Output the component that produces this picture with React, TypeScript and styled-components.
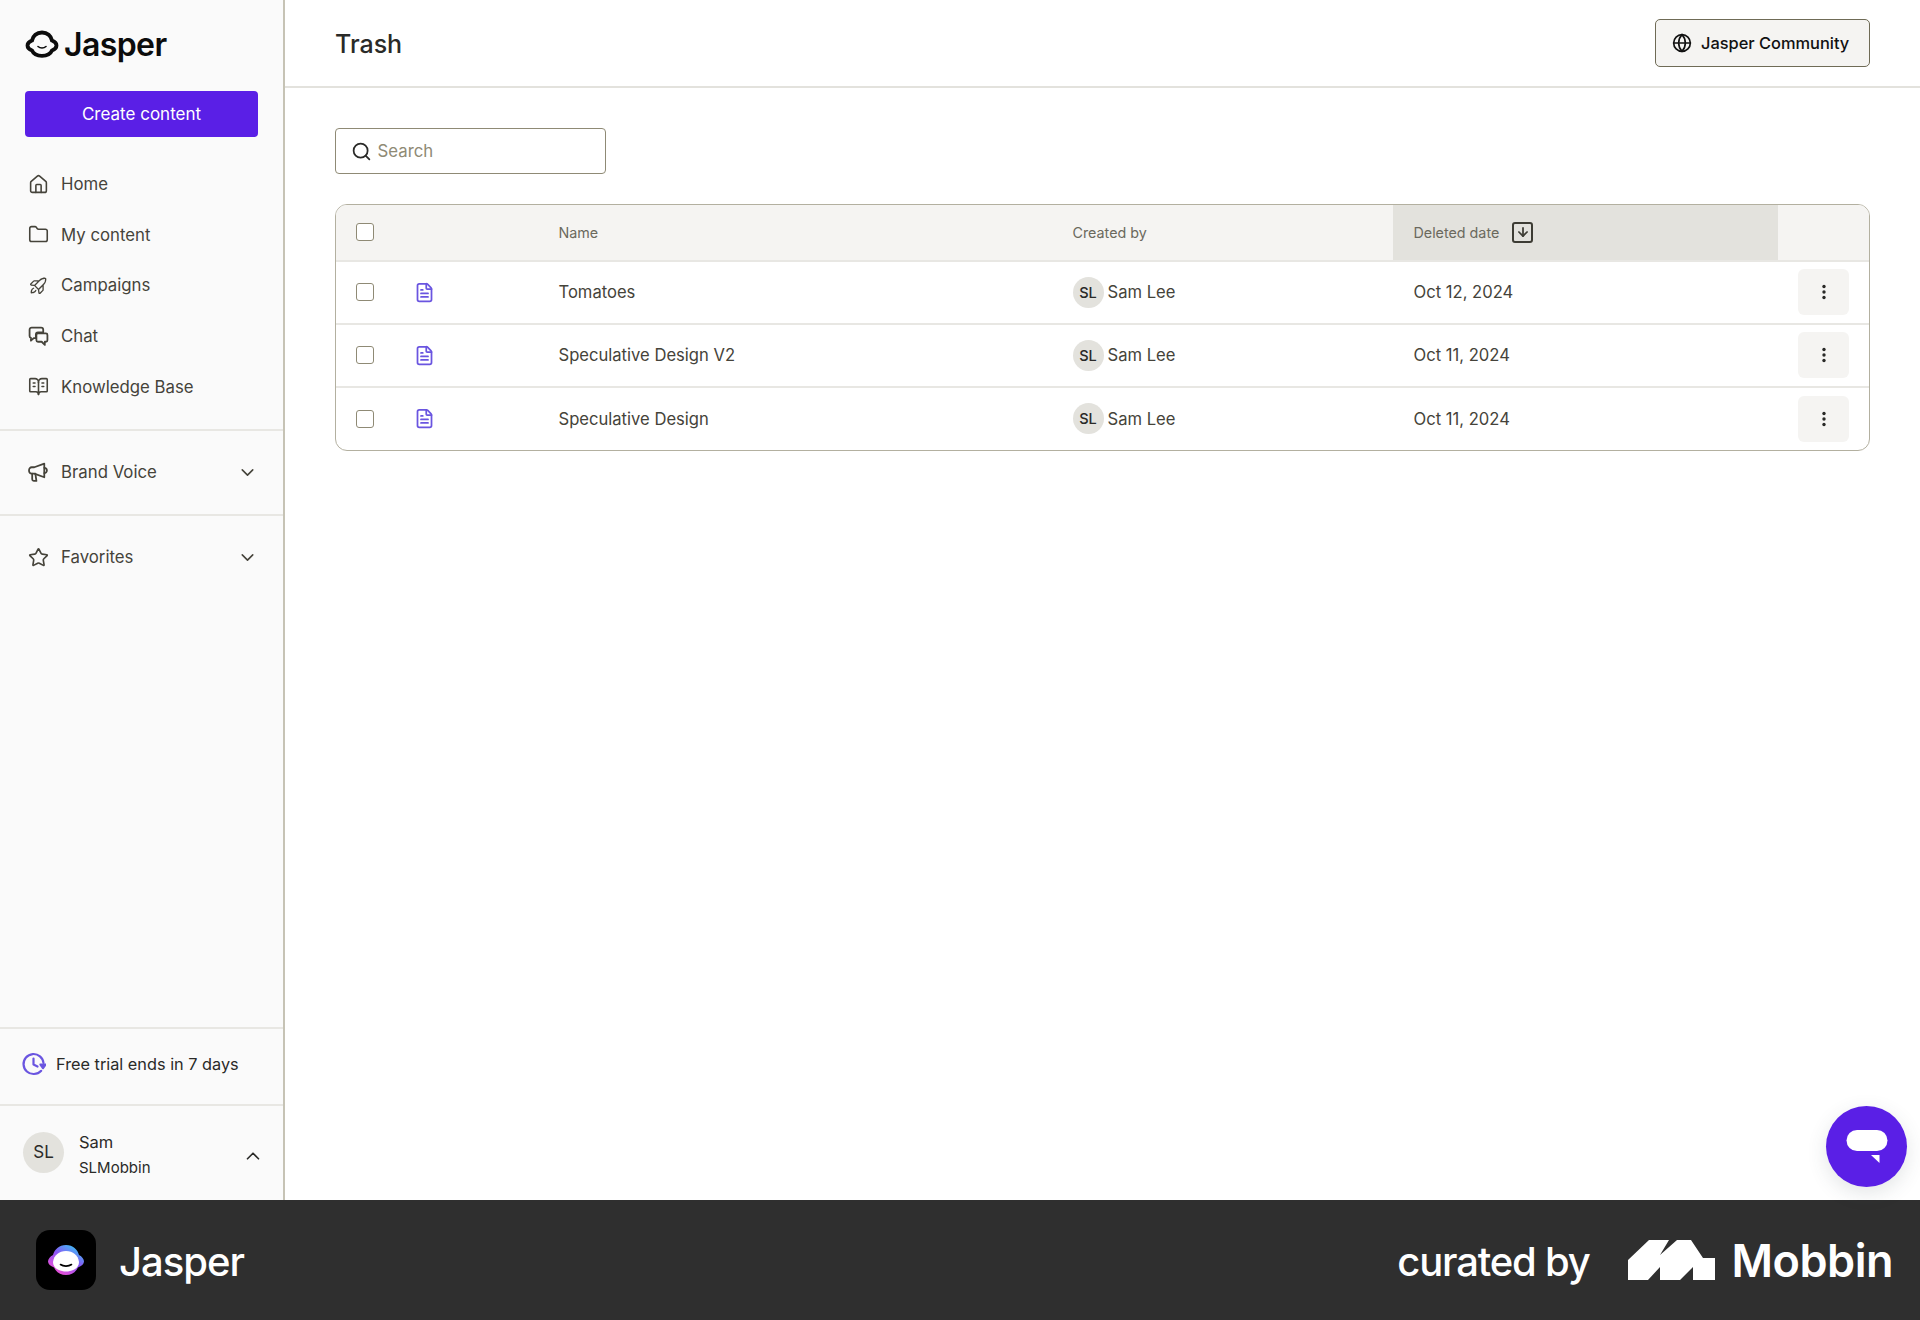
import styled, { createGlobalStyle } from "styled-components";
import {
	House,
	Folder,
	BookOpenText,
	Star,
	ChevronDown,
	ChevronUp,
	FileText,
	Search,
	Globe,
	ArrowDown,
} from "lucide-react";
import { PiRocketLaunch } from "react-icons/pi";

const GlobalStyle = createGlobalStyle`
	html, body {
		margin: 0;
		padding: 0;
		background: #ffffff;
		font-family: Inter, "Liberation Sans", sans-serif;
	}
	* {
		box-sizing: border-box;
	}
`;

const Page = styled.div`
	display: flex;
	flex-direction: column;
	width: 1920px;
	height: 1320px;
	overflow: hidden;
`;

const Body = styled.div`
	position: relative;
	display: flex;
	height: 1200px;
`;

const Sidebar = styled.aside`
	display: flex;
	flex-direction: column;
	flex: 0 0 285px;
	background: #fafafa;
	border-right: 2px solid #c6c3b5;
`;

const SideTop = styled.div`
	padding: 0 25px 17px;
	border-bottom: 2px solid #e8e7e3;
`;

const LogoRow = styled.div`
	display: flex;
	align-items: center;
	gap: 5px;
	height: 91px;
	padding-bottom: 3px;
	color: #0c0c0c;
`;

const LogoText = styled.span`
	font-size: 32px;
	font-weight: 600;
	letter-spacing: -0.6px;
`;

const CreateButton = styled.button`
	display: block;
	width: 233px;
	height: 46px;
	border: none;
	border-radius: 4px;
	background: #5a1fe6;
	color: #ffffff;
	font-family: inherit;
	font-size: 17px;
	font-weight: 400;
`;

const Nav = styled.nav`
	display: flex;
	flex-direction: column;
	margin-top: 22px;
`;

const NavItem = styled.a`
	display: flex;
	align-items: center;
	gap: 12px;
	height: 50.6px;
	padding-left: 3px;
	color: #45433a;
	font-size: 16.8px;
	font-weight: 400;
	svg {
		flex: none;
		width: 21px;
		height: 21px;
	}
`;

const Section = styled.div<{ $grow?: boolean }>`
	display: flex;
	align-items: flex-start;
	height: ${(p) => (p.$grow ? "auto" : "85px")};
	flex: ${(p) => (p.$grow ? "1" : "none")};
	padding: 16px 25px 0 25px;
	border-bottom: 2px solid #e8e7e3;
`;

const SectionItem = styled(NavItem)`
	width: 100%;
`;

const SectionChevron = styled.span`
	display: flex;
	margin-left: auto;
	color: #45433a;
`;

const Trial = styled.div`
	display: flex;
	align-items: center;
	gap: 10px;
	height: 77px;
	padding: 0 0 6px 22px;
	border-bottom: 2px solid #e8e7e3;
	color: #2a2a28;
	font-size: 16.3px;
`;

const Account = styled.div`
	display: flex;
	align-items: center;
	height: 94px;
	padding: 0 19px 2px 23px;
`;

const AccountAvatar = styled.div`
	display: flex;
	align-items: center;
	justify-content: center;
	width: 41px;
	height: 41px;
	border-radius: 50%;
	background: #e3e2dd;
	color: #2a2a28;
	font-size: 17px;
`;

const AccountText = styled.div`
	display: flex;
	flex-direction: column;
	gap: 7px;
	margin: 4px 0 0 15px;
	color: #2a2a28;
`;

const AccountName = styled.span`
	font-size: 16.5px;
	line-height: 20px;
`;

const AccountOrg = styled.span`
	font-size: 15px;
	line-height: 18px;
`;

const AccountChevron = styled.span`
	display: flex;
	margin: 8px 0 0 auto;
	color: #2a2a28;
`;

const Main = styled.main`
	flex: 1;
	min-width: 0;
	background: #ffffff;
`;

const Header = styled.header`
	display: flex;
	align-items: center;
	justify-content: space-between;
	height: 88px;
	padding: 0 50px 0 50px;
	border-bottom: 2px solid #e3e2dd;
`;

const Title = styled.h1`
	margin: 2px 0 0;
	color: #2a2a28;
	font-size: 25px;
	font-weight: 500;
`;

const CommunityButton = styled.button`
	display: flex;
	align-items: center;
	gap: 9px;
	width: 215px;
	height: 48px;
	padding: 0 0 0 16px;
	border: 1.5px solid #6f6b56;
	border-radius: 5px;
	background: #f5f4f2;
	color: #111111;
	font-family: inherit;
	font-size: 16.4px;
	font-weight: 500;
`;

const Content = styled.div`
	padding: 40px 50px 0 49.5px;
`;

const SearchBox = styled.label`
	display: flex;
	align-items: center;
	gap: 4px;
	width: 271px;
	height: 46px;
	padding-left: 15px;
	border: 1.5px solid #8f8a75;
	border-radius: 4px;
	color: #2a2a28;
`;

const SearchInput = styled.input`
	flex: 1;
	min-width: 0;
	border: none;
	outline: none;
	background: transparent;
	font-family: inherit;
	font-size: 16.8px;
	&::placeholder {
		color: #8f8a75;
		opacity: 1;
	}
`;

const Table = styled.div`
	margin-top: 29.5px;
	border: 1.5px solid #b3b0a0;
	border-radius: 12px;
	overflow: hidden;
`;

const COLUMNS = "78px 145px 514px 320px 385px 1fr";

const HeadRow = styled.div`
	display: grid;
	grid-template-columns: ${COLUMNS};
	height: 57px;
	background: #f5f4f2;
	border-bottom: 2px solid #e8e7e3;
	color: #6b695d;
	font-size: 14.3px;
`;

const Row = styled.div`
	display: grid;
	grid-template-columns: ${COLUMNS};
	height: 63px;
	border-bottom: 2px solid #e8e7e3;
	color: #45433a;
	font-size: 16.6px;
	&:last-child {
		border-bottom: none;
		height: 62px;
	}
`;

const Cell = styled.div<{ $sorted?: boolean; $inset?: boolean }>`
	display: flex;
	align-items: center;
	padding-left: ${(p) => (p.$inset ? "21px" : "0")};
	background: ${(p) => (p.$sorted ? "#e3e2dd" : "transparent")};
`;

const CheckCell = styled(Cell)`
	padding-left: 20px;
`;

const ActionCell = styled(Cell)`
	justify-content: flex-end;
	padding-right: 20px;
`;

const Check = styled.input.attrs({ type: "checkbox" })`
	appearance: none;
	width: 18px;
	height: 18px;
	margin: 0;
	border: 1.5px solid #8f8a75;
	border-radius: 3px;
	background: #ffffff;
`;

const DocIcon = styled(FileText)`
	color: #6a55e0;
`;

const SortBox = styled.span`
	display: flex;
	align-items: center;
	justify-content: center;
	width: 21px;
	height: 21px;
	margin-left: 13px;
	border: 2.4px solid #3d3c34;
	border-radius: 3px;
	color: #3d3c34;
`;

const UserAvatar = styled.span`
	display: flex;
	align-items: center;
	justify-content: center;
	width: 31px;
	height: 31px;
	margin-right: 4px;
	border-radius: 50%;
	background: #e3e2dd;
	color: #2a2a28;
	font-size: 14.5px;
	font-weight: 500;
`;

const MoreButton = styled.button`
	display: flex;
	align-items: center;
	justify-content: center;
	width: 51px;
	height: 46px;
	padding: 0;
	border: none;
	border-radius: 6px;
	background: #f5f4f2;
	color: #2a2a28;
`;

const ChatFab = styled.button`
	position: absolute;
	right: 13px;
	bottom: 13px;
	display: flex;
	align-items: center;
	justify-content: center;
	width: 81px;
	height: 81px;
	padding: 0;
	border: none;
	border-radius: 50%;
	background: #5a1fe6;
	box-shadow: 0 6px 20px rgba(60, 70, 80, 0.14);
`;

const Footer = styled.footer`
	display: flex;
	align-items: center;
	height: 120px;
	padding: 0 27px 0 36px;
	background: #2f2f2f;
	color: #ffffff;
`;

const AppIcon = styled.div`
	display: flex;
	align-items: center;
	justify-content: center;
	width: 60px;
	height: 60px;
	border-radius: 14px;
	background: #000000;
`;

const AppName = styled.span`
	margin: 2px 0 0 23px;
	font-size: 40px;
	font-weight: 500;
	letter-spacing: -1px;
`;

const Curated = styled.span`
	margin: 2px 0 0 auto;
	font-size: 40px;
	font-weight: 500;
	letter-spacing: -1.2px;
`;

const MobbinLogo = styled.svg`
	margin-left: 38px;
`;

const MobbinName = styled.span`
	margin-left: 17px;
	font-size: 45px;
	font-weight: 600;
	letter-spacing: -0.5px;
`;

function JasperFace() {
	return (
		<svg width="34" height="28" viewBox="0 0 34 28" fill="none">
			<path
				d="M17 2.500C22.500 2.500 26 6 27 10.500C29.800 11.500 31.500 13.500 31.500 15.500C31.500 18 29.500 19.500 27 20.500C25.500 24 21.500 25.800 17 25.800S8.500 24 7 20.500C4.500 19.500 2.500 18 2.500 15.500C2.500 13.500 4.200 11.500 7 10.500C8 6 11.500 2.500 17 2.500Z"
				stroke="currentColor"
				strokeWidth="3.800"
			/>
			<path d="M13 16.500c2.200 2 5.800 2 8 0" stroke="currentColor" strokeWidth="1.600" strokeLinecap="round" />
		</svg>
	);
}

function ChatIcon() {
	return (
		<svg viewBox="0 0 20 20" fill="none" stroke="currentColor" strokeWidth="1.700" strokeLinejoin="round">
			<path d="M3.500 1.500h9a2 2 0 0 1 2 2v2.500H9.500a2 2 0 0 0-2 2v3.500H5.500L2.800 14v-2.600A1.800 1.800 0 0 1 1.500 9.600V3.500a2 2 0 0 1 2-2Z" />
			<path d="M9.500 7h7.500a1.500 1.500 0 0 1 1.500 1.500v5a1.500 1.500 0 0 1-1.500 1.500h-1V18l-3-3H9.500A1.500 1.500 0 0 1 8 13.500v-5A1.500 1.500 0 0 1 9.500 7Z" />
		</svg>
	);
}

function MegaphoneIcon() {
	return (
		<svg viewBox="0 0 20 20" fill="none" stroke="currentColor" strokeWidth="1.700" strokeLinejoin="round" strokeLinecap="round">
			<path d="M15.500 1.500 6 5H3.500A2.500 2.500 0 0 0 1 7.500v1A2.500 2.500 0 0 0 3.500 11H6l9.500 3.500Z" />
			<path d="M15.500 5.500a2.500 2.500 0 0 1 0 5" />
			<path d="M4 11v5.500c0 .800.600 1.500 1.500 1.500H8l-1-7" />
		</svg>
	);
}

function TrialIcon() {
	return (
		<svg width="24" height="24" viewBox="0 0 24 24" fill="none" stroke="#6a55e0" strokeWidth="2.200" strokeLinecap="round" strokeLinejoin="round">
			<path d="M21.500 11A10 10 0 1 0 12 22c3 0 5.400-1.200 7.200-3.200" />
			<path d="M11.500 6.500V12.500L15.500 14.500" />
			<path d="M18.500 12.500h5l-2.500 3.500Z" fill="#6a55e0" />
		</svg>
	);
}

function DotsIcon() {
	return (
		<svg width="6" height="18" viewBox="0 0 6 18" fill="currentColor">
			<circle cx="3" cy="3.500" r="1.700" />
			<circle cx="3" cy="9" r="1.700" />
			<circle cx="3" cy="14.500" r="1.700" />
		</svg>
	);
}

function ChatBubbleIcon() {
	return (
		<svg width="42" height="34" viewBox="0 0 42 34" fill="#ffffff">
			<rect x="0.500" y="0" width="41" height="21" rx="10.500" />
			<path d="M25 25h8.500v8Z" />
		</svg>
	);
}

function GradientFace() {
	return (
		<svg width="36" height="30" viewBox="0 0 36 30">
			<defs>
				<linearGradient id="faceRing" x1="0.850" y1="0" x2="0.150" y2="1">
					<stop offset="0" stopColor="#2fd0f5" />
					<stop offset="0.450" stopColor="#8a55f5" />
					<stop offset="1" stopColor="#ff4fd0" />
				</linearGradient>
			</defs>
			<path
				d="M18 0C25 0 29.500 4.500 31 10C34 11.500 36 14 36 16.500C36 19 33.500 21 30 22.500C27.500 27.500 23.500 30 18 30S8.500 27.500 6 22.500C2.500 21 0 19 0 16.500C0 14 2 11.500 5 10C6.500 4.500 11 0 18 0Z"
				fill="url(#faceRing)"
			/>
			<path d="M18 6C25 6 30 10 31 17C31 23 25 26.500 18 26.500S5 23 5 17C6 10 11 6 18 6Z" fill="#ffffff" />
			<path d="M12.500 19.500c3 2.200 8 2.200 11 0" fill="none" stroke="#000000" strokeWidth="1.600" strokeLinecap="round" />
		</svg>
	);
}

type TrashRow = {
	name: string;
	date: string;
};

const rows: TrashRow[] = [
	{ name: "Tomatoes", date: "Oct 12, 2024" },
	{ name: "Speculative Design V2", date: "Oct 11, 2024" },
	{ name: "Speculative Design", date: "Oct 11, 2024" },
];

export default function App() {
	return (
		<Page>
			<GlobalStyle />
			<Body>
				<Sidebar>
					<SideTop>
						<LogoRow>
							<JasperFace />
							<LogoText>Jasper</LogoText>
						</LogoRow>
						<CreateButton>Create content</CreateButton>
						<Nav>
							<NavItem><House strokeWidth={1.8} />Home</NavItem>
							<NavItem><Folder strokeWidth={1.8} />My content</NavItem>
							<NavItem><PiRocketLaunch />Campaigns</NavItem>
							<NavItem><ChatIcon />Chat</NavItem>
							<NavItem><BookOpenText strokeWidth={1.8} />Knowledge Base</NavItem>
						</Nav>
					</SideTop>
					<Section>
						<SectionItem>
							<MegaphoneIcon />
							Brand Voice
							<SectionChevron><ChevronDown size={20} strokeWidth={1.800} /></SectionChevron>
						</SectionItem>
					</Section>
					<Section $grow>
						<SectionItem>
							<Star strokeWidth={1.900} />
							Favorites
							<SectionChevron><ChevronDown size={20} strokeWidth={1.800} /></SectionChevron>
						</SectionItem>
					</Section>
					<Trial>
						<TrialIcon />
						Free trial ends in 7 days
					</Trial>
					<Account>
						<AccountAvatar>SL</AccountAvatar>
						<AccountText>
							<AccountName>Sam</AccountName>
							<AccountOrg>SLMobbin</AccountOrg>
						</AccountText>
						<AccountChevron><ChevronUp size={22} strokeWidth={1.800} /></AccountChevron>
					</Account>
				</Sidebar>
				<Main>
					<Header>
						<Title>Trash</Title>
						<CommunityButton>
							<Globe size={20} strokeWidth={2} />
							Jasper Community
						</CommunityButton>
					</Header>
					<Content>
						<SearchBox>
							<Search size={21} strokeWidth={2} />
							<SearchInput placeholder="Search" />
						</SearchBox>
						<Table>
							<HeadRow>
								<CheckCell><Check /></CheckCell>
								<Cell />
								<Cell>Name</Cell>
								<Cell>Created by</Cell>
								<Cell $sorted $inset>
									Deleted date
									<SortBox><ArrowDown size={14} strokeWidth={3} /></SortBox>
								</Cell>
								<Cell />
							</HeadRow>
							{rows.map((row, i) => (
								<Row key={i}>
									<CheckCell><Check /></CheckCell>
									<Cell><DocIcon size={21} strokeWidth={2} /></Cell>
									<Cell>{row.name}</Cell>
									<Cell>
										<UserAvatar>SL</UserAvatar>
										Sam Lee
									</Cell>
									<Cell $inset>{row.date}</Cell>
									<ActionCell>
										<MoreButton><DotsIcon /></MoreButton>
									</ActionCell>
								</Row>
							))}
						</Table>
					</Content>
				</Main>
				<ChatFab><ChatBubbleIcon /></ChatFab>
			</Body>
			<Footer>
				<AppIcon><GradientFace /></AppIcon>
				<AppName>Jasper</AppName>
				<Curated>curated by</Curated>
				<MobbinLogo width="87" height="40" viewBox="0 0 87 40" fill="#ffffff">
					<path d="M0 40V20L21 0H41L32 15 49 0H63L75 18H87V40H65V27L52 40H32V27L20 40Z" />
				</MobbinLogo>
				<MobbinName>Mobbin</MobbinName>
			</Footer>
		</Page>
	);
}
